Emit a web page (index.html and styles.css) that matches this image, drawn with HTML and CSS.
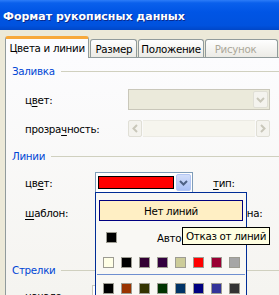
FILE: index.html
```html
<!DOCTYPE html>
<html lang="ru">
<head>
  <meta charset="UTF-8">
  <title>Формат рукописных данных</title>
  <link rel="stylesheet" href="styles.css">
</head>
<body>
  <div class="window">
    <div class="titlebar">Формат рукописных данных</div>

    <div class="dialog">
      <div class="tabs">
        <div class="tab tab-active">Цвета и линии</div>
        <div class="tab tab-size">Размер</div>
        <div class="tab tab-pos">Положение</div>
        <div class="tab tab-off">Рисунок</div>
      </div>

      <div class="panel">
        <div class="section">Заливка</div>
        <div class="row row-fill">
          <span class="label">ц<u>в</u>ет:</span>
          <div class="combo combo-off">
            <span class="combo-btn btn-off">
              <svg width="9" height="6" viewBox="0 0 9 6"><path d="M1 1 L4.5 4.5 L8 1" fill="none" stroke="#c9c7ba" stroke-width="2"/></svg>
            </span>
          </div>
        </div>
        <div class="row row-alpha">
          <span class="label">прозра<u>ч</u>ность:</span>
          <div class="slider">
            <span class="arrow">
              <svg width="6" height="9" viewBox="0 0 6 9"><path d="M5 1 L1.5 4.5 L5 8" fill="none" stroke="#c9c7ba" stroke-width="2"/></svg>
            </span>
            <span class="track"></span>
            <span class="arrow">
              <svg width="6" height="9" viewBox="0 0 6 9"><path d="M1 1 L4.5 4.5 L1 8" fill="none" stroke="#c9c7ba" stroke-width="2"/></svg>
            </span>
          </div>
        </div>

        <div class="section">Линии</div>
        <div class="row row-line">
          <span class="label">цв<u>е</u>т:</span>
          <div class="combo combo-hot">
            <span class="swatch-red"></span>
            <span class="combo-btn btn-hot">
              <svg width="9" height="6" viewBox="0 0 9 6"><path d="M1 1 L4.5 4.5 L8 1" fill="none" stroke="#4d6185" stroke-width="2"/></svg>
            </span>
          </div>
          <span class="label-right"><u>т</u>ип:</span>
        </div>
        <div class="row row-dash">
          <span class="label"><u>ш</u>аблон:</span>
          <div class="combo combo-hidden"></div>
          <span class="label-right">толщина:</span>
        </div>

        <div class="section section-arrows">Стрелки</div>
        <div class="row row-begin">
          <span class="label">начало:</span>
          <div class="combo combo-begin"></div>
        </div>
      </div>
    </div>

    <div class="popup">
      <div class="no-line">Нет линий</div>
      <div class="auto-row">
        <span class="swatch" style="background:#000000"></span>
        <span class="auto-text">Авто</span>
      </div>
      <div class="swatch-row">
        <span class="swatch" style="background:#ffffe6"></span>
        <span class="swatch" style="background:#000000"></span>
        <span class="swatch" style="background:#330033"></span>
        <span class="swatch" style="background:#33003f"></span>
        <span class="swatch" style="background:#cccc99"></span>
        <span class="swatch" style="background:#ff0000"></span>
        <span class="swatch" style="background:#990033"></span>
        <span class="swatch" style="background:#a6a6a6"></span>
      </div>
      <div class="separator"></div>
      <div class="swatch-row">
        <span class="swatch" style="background:#000000"></span>
        <span class="swatch" style="background:#993300"></span>
        <span class="swatch" style="background:#333300"></span>
        <span class="swatch" style="background:#003300"></span>
        <span class="swatch" style="background:#003366"></span>
        <span class="swatch" style="background:#000080"></span>
        <span class="swatch" style="background:#333399"></span>
        <span class="swatch" style="background:#333333"></span>
      </div>
    </div>

    <div class="tooltip">Отказ от линий</div>
  </div>
</body>
</html>
```

FILE: styles.css
```css
body {
  margin: 0;
  font-family: "DejaVu Sans", sans-serif;
  font-size: 10.3px;
  letter-spacing: -0.3px;
  color: #000;
  background: #ece9d8;
}
u {
  text-decoration-thickness: 1px;
  text-underline-offset: 2px;
}
.window {
  position: relative;
  width: 279px;
  height: 295px;
  overflow: hidden;
  background: #ece9d8;
}

/* title bar */
.titlebar {
  height: 30px;
  box-sizing: border-box;
  padding: 2px 0 0 3px;
  display: flex;
  align-items: center;
  color: #fff;
  font-weight: bold;
  font-size: 11px;
  letter-spacing: 0;
  text-shadow: 1px 1px 0 #0a2a8c;
  background: linear-gradient(#2c7cf8 0, #0a60ec 3px, #0055e5 40%, #0052de 85%, #0047c8 100%);
}

/* tabs */
.dialog {
  padding: 6px 0 0 5px;
}
.tabs {
  display: flex;
  align-items: flex-end;
  height: 21px;
  position: relative;
  z-index: 1;
}
.tab {
  height: 18px;
  box-sizing: border-box;
  border: 1px solid #919b9c;
  border-bottom: none;
  border-radius: 3px 3px 0 0;
  background: linear-gradient(#fefefe, #ecebe6);
  display: flex;
  align-items: center;
  justify-content: center;
  margin-right: 1px;
}
.tab-active {
  width: 93px;
  height: 22px;
  margin-bottom: -1px;
  border-top: 3px solid #f7a83a;
  background: #fcfcfe;
  padding-bottom: 2px;
}
.tab-size {
  width: 52px;
}
.tab-pos {
  width: 72px;
}
.tab-off {
  width: 80px;
  color: #aca899;
  justify-content: flex-start;
  padding-left: 9px;
}

/* panel */
.panel {
  border: 1px solid #919b9c;
  border-right: none;
  height: 260px;
  padding: 5px 0 0 6px;
  background: linear-gradient(#fcfcfe, #f4f3ee);
}
.section {
  display: flex;
  align-items: center;
  gap: 6px;
  height: 14px;
  color: #0046d5;
  margin-top: 1px;
}
.section::after {
  content: "";
  flex: 1;
  border-top: 1px solid #d0d0bf;
}
.row {
  display: flex;
  align-items: center;
  position: relative;
}
.label {
  width: 116px;
  padding-left: 13px;
  box-sizing: border-box;
  flex: none;
  white-space: nowrap;
}
.label-right {
  position: absolute;
  left: 201px;
}
.row-fill {
  margin-top: 11px;
  height: 21px;
}
.row-alpha {
  margin-top: 10px;
  height: 17px;
}
.row-alpha + .section {
  margin-top: 12px;
}
.row-line {
  margin-top: 9px;
  height: 21px;
}
.row-dash {
  margin-top: 9px;
  height: 21px;
}
.section-arrows {
  margin-top: 40px;
}
.row-begin {
  margin-top: 8px;
  height: 21px;
}

/* combo boxes */
.combo {
  height: 21px;
  box-sizing: border-box;
  border: 1px solid #7f9db9;
  background: #fff;
  display: flex;
  align-items: center;
  justify-content: flex-end;
  padding: 1px;
}
.combo-off {
  width: 142px;
  border-color: #c9c7ba;
  background: #ebeadb;
}
.combo-hot {
  width: 98px;
  margin-left: -33px;
  justify-content: space-between;
}
.combo-hidden {
  width: 98px;
  margin-left: -33px;
}
.combo-begin {
  width: 98px;
  margin-left: -36px;
  border-color: #c9c7ba;
}
.combo-btn {
  width: 15px;
  height: 17px;
  box-sizing: border-box;
  display: flex;
  align-items: center;
  justify-content: center;
  border-radius: 2px;
}
.btn-off {
  border: 1px solid #e0dfd6;
  background: #f4f3ee;
}
.btn-hot {
  border: 1px solid #b3c6f4;
  background: linear-gradient(#d2defa, #a9c0f6);
}
.swatch-red {
  width: 76px;
  height: 13px;
  box-sizing: border-box;
  margin-left: 1px;
  border: 1px solid #000;
  background: #ff0000;
}

/* transparency slider */
.slider {
  width: 142px;
  height: 17px;
  display: flex;
  gap: 1px;
}
.arrow {
  width: 14px;
  box-sizing: border-box;
  border: 1px solid #e0dfd6;
  border-radius: 2px;
  background: #f4f3ee;
  display: flex;
  align-items: center;
  justify-content: center;
}
.track {
  flex: 1;
  background: #f6f5ee;
  border-top: 1px solid #ecebe4;
  border-bottom: 1px solid #ecebe4;
}

/* colour popup */
.popup {
  position: absolute;
  left: 95px;
  top: 192px;
  width: 152px;
  height: 120px;
  box-sizing: border-box;
  border: 1px solid #002d96;
  background: #f9f8f4;
  padding: 7px 3px 0 3px;
}
.no-line {
  height: 21px;
  box-sizing: border-box;
  border: 1px solid #000080;
  background: #ffefc4;
  display: flex;
  align-items: center;
  justify-content: center;
}
.auto-row {
  display: flex;
  align-items: center;
  height: 11px;
  margin-top: 11px;
  padding-left: 7px;
}
.auto-text {
  margin-left: 40px;
}
.swatch {
  width: 11px;
  height: 11px;
  box-sizing: border-box;
  border: 1px solid #9d9c92;
  flex: none;
}
.swatch-row {
  display: flex;
  gap: 7px;
  padding-left: 4px;
  margin-top: 14px;
}
.separator {
  margin: 6px -2px 0 -2px;
  border-top: 1px solid #6f8fd0;
}
.separator + .swatch-row {
  margin-top: 8px;
}

/* tooltip */
.tooltip {
  position: absolute;
  left: 182px;
  top: 227px;
  height: 18px;
  box-sizing: border-box;
  padding: 0 3px;
  display: flex;
  align-items: center;
  border: 1px solid #000;
  background: #ffffe1;
}
```
